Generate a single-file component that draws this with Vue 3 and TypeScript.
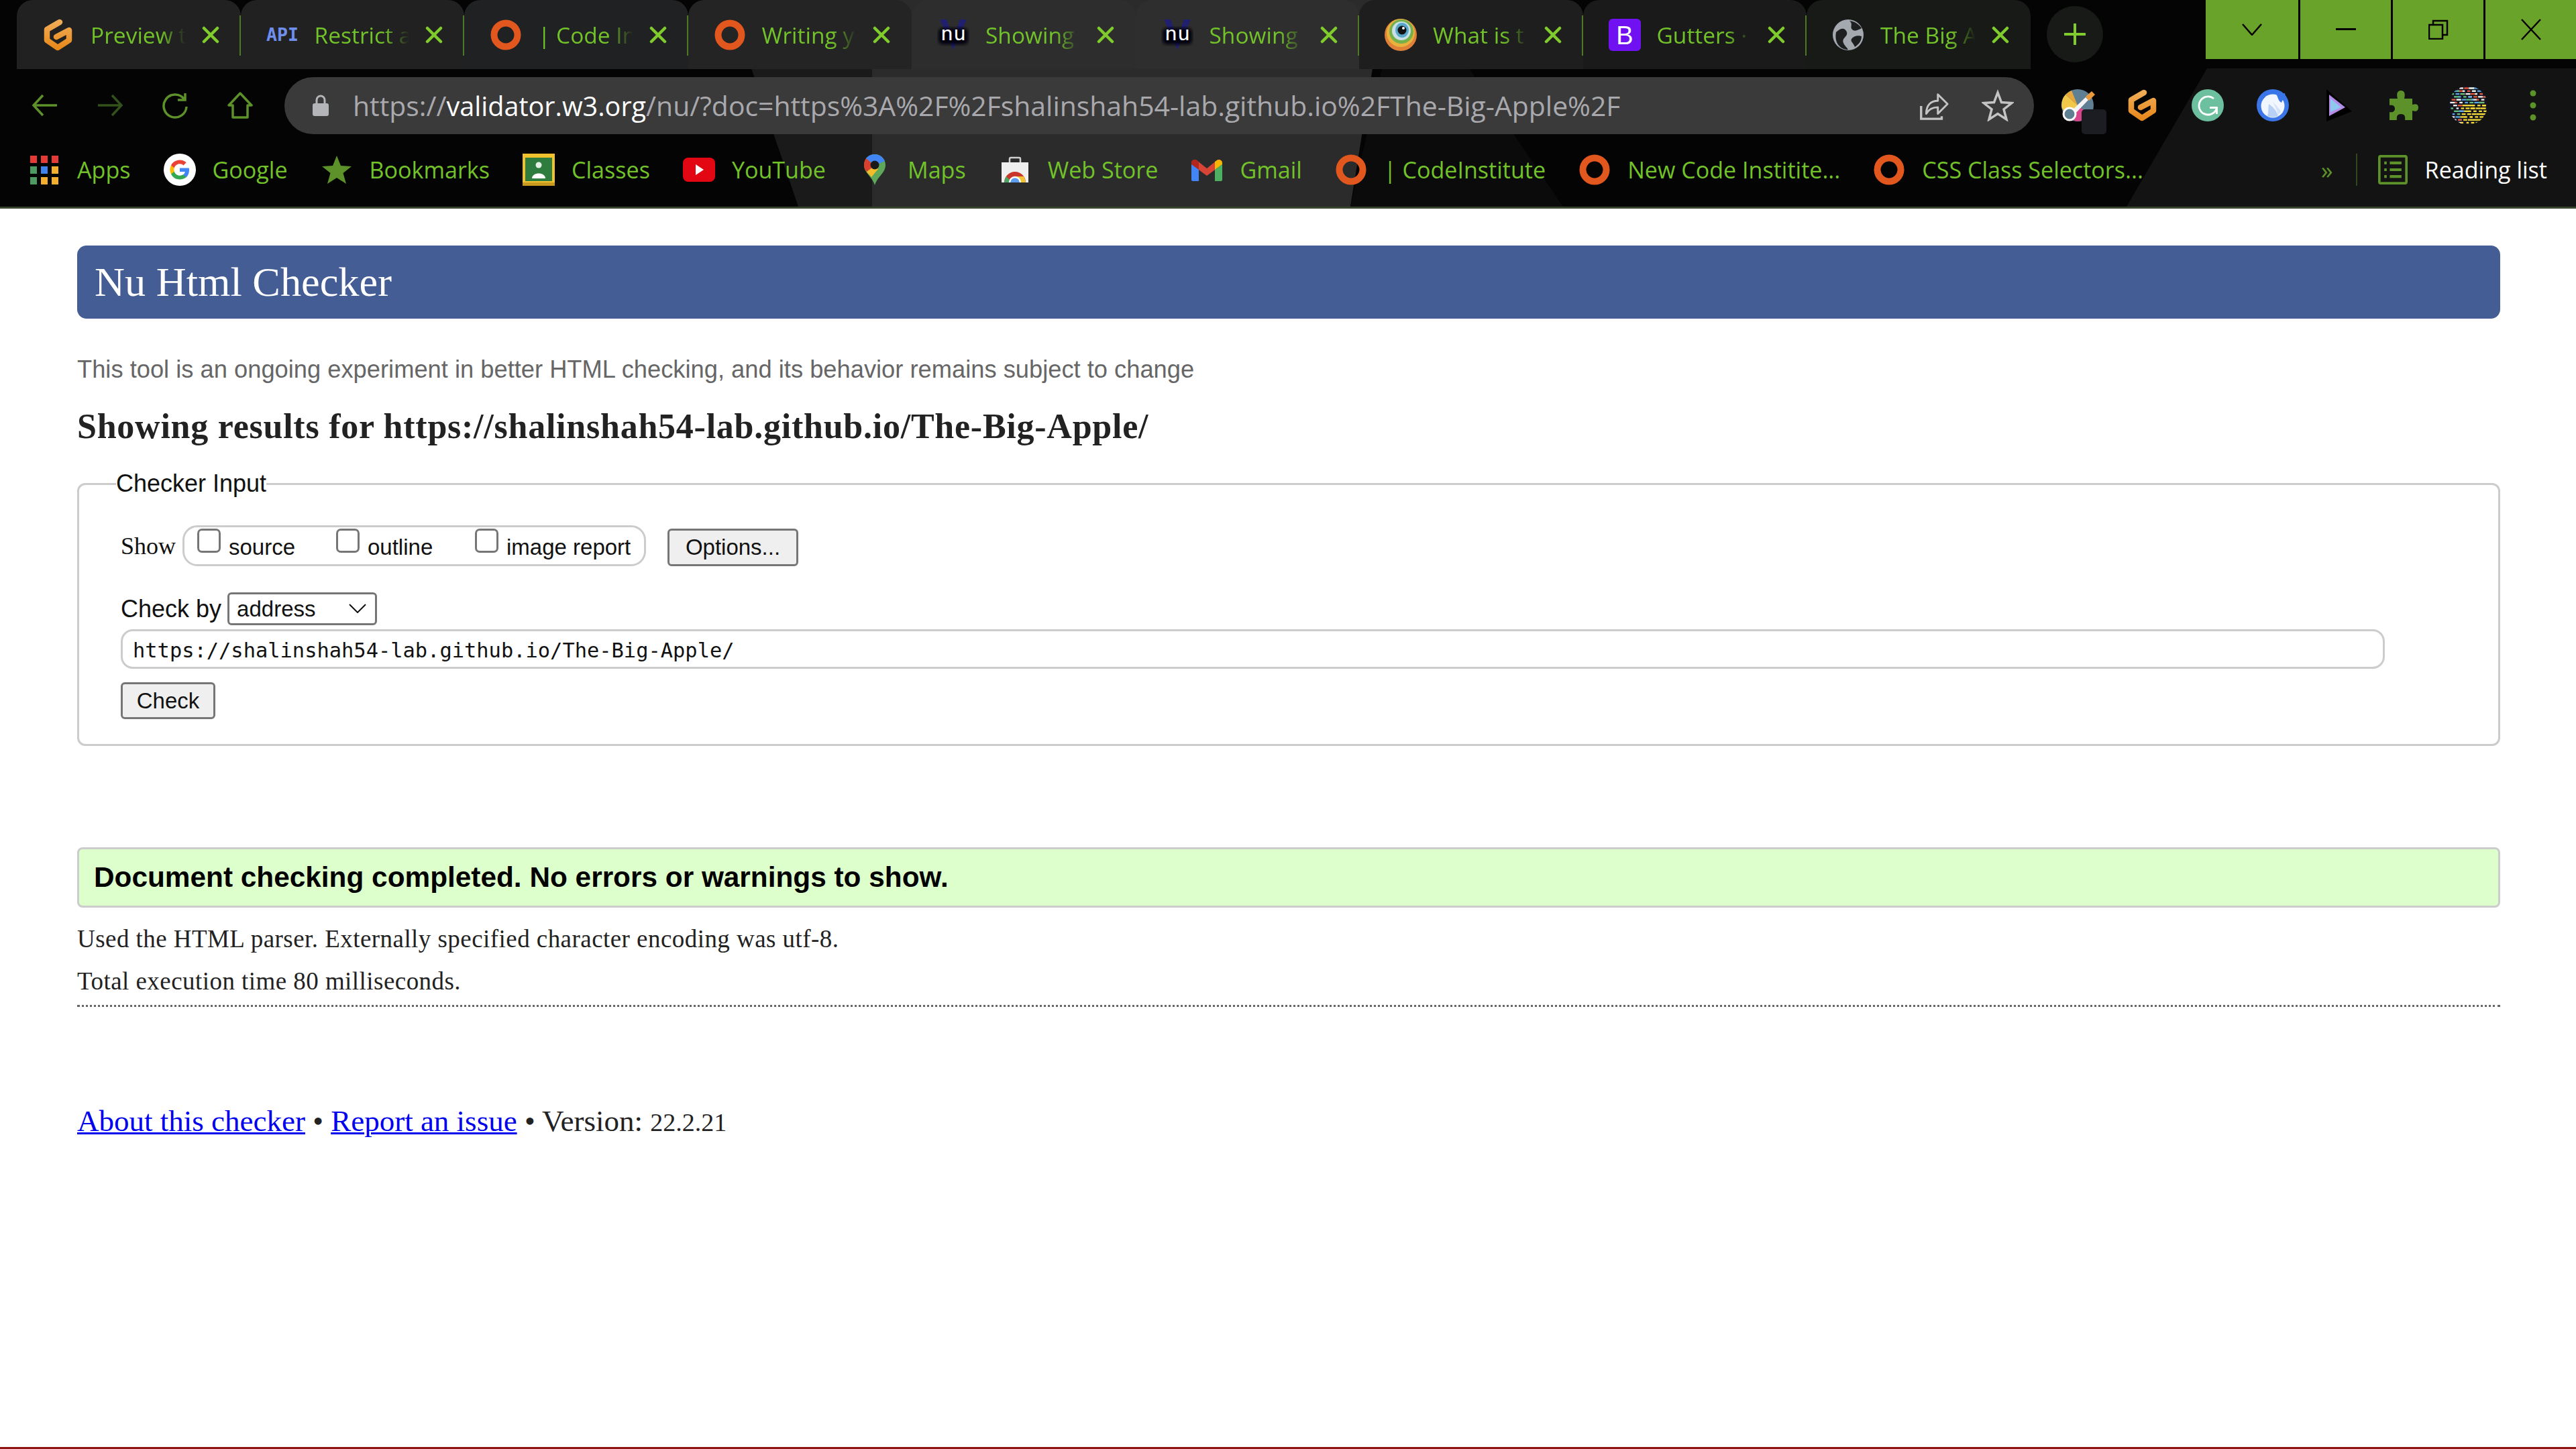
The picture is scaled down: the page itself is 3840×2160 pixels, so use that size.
<script setup lang="ts">
interface Tab {
  icon: string
  title: string
  bg: string
  sep: boolean
  glyph?: string
}

interface Mark {
  icon: string
  label: string
}

const tabs: Tab[] = [
  { icon: 'i-gitpod', title: 'Preview t', bg: '#212121', sep: true },
  { icon: 'i-blank', title: 'Restrict a', bg: '#212121', sep: true, glyph: 'api' },
  { icon: 'i-ring', title: '| Code In', bg: '#202122', sep: true },
  { icon: 'i-ring', title: 'Writing y', bg: '#242424', sep: false },
  { icon: 'i-nu', title: 'Showing', bg: '#2d2d2d', sep: false, glyph: 'nu' },
  { icon: 'i-nu', title: 'Showing', bg: '#2e2e2e', sep: true, glyph: 'nu' },
  { icon: 'i-eye', title: 'What is t', bg: '#1e1e1e', sep: true },
  { icon: 'i-boot', title: 'Gutters ·', bg: '#1a1a1a', sep: true, glyph: 'boot' },
  { icon: 'i-globe', title: 'The Big A', bg: '#181a18', sep: false },
]

const marks: Mark[] = [
  { icon: 'i-apps', label: 'Apps' },
  { icon: 'i-google', label: 'Google' },
  { icon: 'i-star', label: 'Bookmarks' },
  { icon: 'i-classes', label: 'Classes' },
  { icon: 'i-youtube', label: 'YouTube' },
  { icon: 'i-maps', label: 'Maps' },
  { icon: 'i-store', label: 'Web Store' },
  { icon: 'i-gmail', label: 'Gmail' },
  { icon: 'i-ring', label: '| CodeInstitute' },
  { icon: 'i-ring', label: 'New Code Institite...' },
  { icon: 'i-ring', label: 'CSS Class Selectors...' },
]

const extensions = ['i-palette', 'i-gitpod', 'i-grammarly', 'i-bird', 'i-arrow', 'i-puzzle', 'i-avatar', 'i-dots']

// the profile picture is a photo of code, so rows of coloured dashes
const dashes = Array.from({ length: 110 }, (_, i) => {
  const row = i % 13
  const x = 2 + ((i * 29) % 44)
  let fill = ['#f0f0f0', '#5aa6e8', '#e8583c', '#62c47c'][(i * 7) % 4]
  if (row > 5 && x > 14)
    fill = '#f6dc35'
  return { x, y: 2 + row * 3.7, w: 3 + (i % 5), fill }
})
</script>

<template>
  <div class="page">
    <svg class="sprite" aria-hidden="true">
      <defs>
        <linearGradient id="g-orange" x1="0" y1="0" x2="0" y2="1">
          <stop offset="0" stop-color="#f0ac55" />
          <stop offset="1" stop-color="#e8891c" />
        </linearGradient>
        <filter id="soft"><feGaussianBlur stdDeviation="2.500" /></filter>
        <clipPath id="bag-clip"><rect x="4" y="13" width="40" height="30" /></clipPath>
      </defs>
      <symbol id="i-blank" viewBox="0 0 48 48" />
      <symbol id="i-gitpod" viewBox="0 0 48 48">
        <path d="M26 5 L7 16 V32 L23 43 L40 32 V17 L21 27" fill="none" stroke="url(#g-orange)" stroke-width="8.500" stroke-linejoin="round" stroke-linecap="round" />
      </symbol>
      <symbol id="i-ring" viewBox="0 0 48 48">
        <circle cx="24" cy="24" r="17.500" fill="none" stroke="#e2571e" stroke-width="10" />
      </symbol>
      <symbol id="i-nu" viewBox="0 0 48 48">
        <path d="M4 1 L24 46 L44 1 H34 L24 28 L14 1 Z" fill="#20206e" />
        <rect x="2" y="14" width="44" height="24" rx="6" fill="#060608" filter="url(#soft)" />
      </symbol>
      <symbol id="i-eye" viewBox="0 0 48 48">
        <ellipse cx="24" cy="24" rx="24" ry="24" fill="#e0813a" />
        <ellipse cx="24" cy="21" rx="21" ry="21" fill="#e8b23c" />
        <ellipse cx="25" cy="19" rx="18" ry="18" fill="#76b04a" />
        <ellipse cx="25" cy="18" rx="14" ry="14" fill="#c9dfe6" />
        <ellipse cx="26" cy="17" rx="10" ry="11" fill="#58a6c8" />
        <circle cx="26" cy="17" r="6.500" fill="#111" />
        <circle cx="28" cy="14" r="2" fill="#fff" />
      </symbol>
      <symbol id="i-boot" viewBox="0 0 48 48">
        <rect width="48" height="48" rx="6" fill="#7011f2" />
      </symbol>
      <symbol id="i-globe" viewBox="0 0 48 48">
        <circle cx="24" cy="24" r="23" fill="#a4a8af" />
        <path d="M6 20 C14 12 20 14 22 20 C24 27 14 28 17 36 C19 41 22 42 24 46 C12 46 3 36 6 20 Z M26 3 C32 8 26 12 30 16 C34 20 40 16 44 14 C40 8 34 4 26 3 Z M44 26 C38 24 32 26 29 30 C27 34 32 36 34 42 C40 38 44 33 44 26 Z" fill="#1d1f20" />
      </symbol>
      <symbol id="i-apps" viewBox="0 0 48 48">
        <g fill="#e53a35"><rect x="3" y="3" width="10" height="11" /><rect x="19" y="3" width="10" height="11" /><rect x="35" y="3" width="10" height="11" /></g>
        <rect x="3" y="19" width="10" height="11" fill="#4d9a63" /><rect x="19" y="19" width="10" height="11" fill="#3f83ef" /><rect x="35" y="19" width="10" height="11" fill="#f2ae2c" />
        <rect x="3" y="35" width="10" height="11" fill="#4d9a63" /><rect x="19" y="35" width="10" height="11" fill="#f2ae2c" /><rect x="35" y="35" width="10" height="11" fill="#f2ae2c" />
      </symbol>
      <symbol id="i-google" viewBox="0 0 48 48">
        <circle cx="24" cy="24" r="24" fill="#fff" />
        <path d="M38 24.400c0-1-.1-2-.3-3H24v5.700h7.900a6.800 6.800 0 0 1-2.900 4.400v3.700h4.700c2.800-2.600 4.300-6.300 4.300-10.800z" fill="#4285f4" />
        <path d="M24 38.500c3.900 0 7.200-1.300 9.700-3.500L29 31.300c-1.300.9-3 1.400-5 1.400-3.800 0-7-2.500-8.200-6h-4.800v3.800A14.500 14.500 0 0 0 24 38.500z" fill="#34a853" />
        <path d="M15.800 26.700a8.700 8.700 0 0 1 0-5.500v-3.800H11a14.500 14.500 0 0 0 0 13.100z" fill="#fbbc05" />
        <path d="M24 15.300c2.100 0 4 .7 5.500 2.200l4.200-4.200A14.500 14.500 0 0 0 11 17.400l4.800 3.800c1.200-3.400 4.400-5.900 8.200-5.900z" fill="#ea4335" />
      </symbol>
      <symbol id="i-star" viewBox="0 0 48 48">
        <path d="M24 3 L30 18 L46 19 L33.500 29 L38 45 L24 36 L10 45 L14.500 29 L2 19 L18 18 Z" fill="#5d9129" />
      </symbol>
      <symbol id="i-classes" viewBox="0 0 48 48">
        <rect width="48" height="48" fill="#f2c12e" />
        <rect x="4" y="6" width="40" height="35" fill="#2e7d3f" />
        <circle cx="24" cy="17" r="4.500" fill="#e6efe4" />
        <path d="M14 37 C14 27 34 27 34 37 Z" fill="#fff" />
        <rect y="43" width="48" height="5" fill="#c99a1e" />
      </symbol>
      <symbol id="i-youtube" viewBox="0 0 48 48">
        <rect y="6" width="48" height="36" rx="8" fill="#e30613" />
        <path d="M19 16 L31 24 L19 32 Z" fill="#fff" />
      </symbol>
      <symbol id="i-maps" viewBox="0 0 48 48">
        <path d="M24 1 C14 1 8 9 8 17 C8 29 20 34 24 47 C28 34 40 29 40 17 C40 9 34 1 24 1 Z" fill="#5fa85a" />
        <path d="M11 7 C14 3 19 1 24 1 C31 1 36 5 39 11 L24 18 Z" fill="#4285f4" />
        <path d="M8 17 C8 13 9 10 11 7 L24 18 L12 27 C9 24 8 21 8 17 Z" fill="#d9402f" />
        <path d="M12 27 L24 18 L29 23 L19 35 C17 32 14 30 12 27 Z" fill="#f2bc2a" />
        <circle cx="24" cy="17" r="6.500" fill="#1a1a1a" />
      </symbol>
      <symbol id="i-store" viewBox="0 0 48 48">
        <path d="M16 15 V8 Q16 6 18 6 H30 Q32 6 32 8 V15" fill="none" stroke="#cfcfcf" stroke-width="2.500" />
        <rect x="4" y="13" width="40" height="30" fill="#efefef" />
        <g clip-path="url(#bag-clip)">
          <path d="M8 43 A16 16 0 0 1 40 43 H33 L24 37 L15 43 Z" fill="#c9362b" />
          <path d="M8 43 A16 16 0 0 1 11 34 L17 40 L15 43 Z" fill="#4aa564" />
          <path d="M40 43 A16 16 0 0 0 37 34 L24 34 L33 43 Z" fill="#efc335" />
          <circle cx="24" cy="43" r="8" fill="#5c9df0" stroke="#fff" stroke-width="2.500" />
        </g>
      </symbol>
      <symbol id="i-gmail" viewBox="0 0 48 48">
        <path d="M1 14 A5 5 0 0 1 9 10 L24 22 L39 10 A5 5 0 0 1 47 14 V16 L24 33 L1 16 Z" fill="#d94534" />
        <path d="M1 14 A5 5 0 0 1 9 10 L12 12 V24 L1 16 Z" fill="#b3261e" />
        <path d="M47 14 A5 5 0 0 0 39 10 L36 12 V24 L47 16 Z" fill="#f6b704" />
        <path d="M1 16 L12 24 V41 H3 A2 2 0 0 1 1 39 Z" fill="#4285f4" />
        <path d="M47 16 L36 24 V41 H45 A2 2 0 0 0 47 39 Z" fill="#4caf62" />
      </symbol>
      <symbol id="i-palette" viewBox="0 0 67 67">
        <circle cx="24" cy="24" r="24" fill="#5f7f93" />
        <path d="M0 24 A24 24 0 0 1 6 8 L24 24 L12 38 C5 35 0 30 0 24 Z" fill="#f2c84a" />
        <path d="M6 8 A24 24 0 0 1 15 2 L24 24 Z" fill="#e6a83c" />
        <path d="M12 38 L24 24 L40 36 C36 44 30 48 24 48 C19 48 15 44 12 38 Z" fill="#d9458a" />
        <path d="M14 33 L36 12 L40 16 L19 38 Z" fill="#f4f4f4" />
        <path d="M36 11 L45 3 L50 8 L41 17 Z" fill="#e89a3c" />
        <circle cx="12" cy="37" r="9" fill="#5f7f93" stroke="#fff" stroke-width="3" />
        <rect x="30" y="30" width="37" height="37" rx="5" fill="#1c1d22" />
      </symbol>
      <symbol id="i-grammarly" viewBox="0 0 48 48">
        <circle cx="24" cy="24" r="24" fill="#6cbf9f" />
        <path d="M33 14 A13.500 13.500 0 1 0 37.500 28" fill="none" stroke="#fff" stroke-width="2.800" />
        <path d="M27 27.500 H37.500 V37" fill="none" stroke="#fff" stroke-width="2.800" />
      </symbol>
      <symbol id="i-bird" viewBox="0 0 48 48">
        <circle cx="24" cy="24" r="24" fill="#3b76e8" />
        <circle cx="24" cy="25" r="17.500" fill="#f2f6fe" />
        <path d="M29 7 C32 12 32 18 37 20 C38 16 40 14 44 16 L42 6 Z" fill="#3b76e8" />
        <path d="M18 22 C24 26 30 32 32 40 C26 42 20 42 16 40 C18 34 17 28 18 22 Z" fill="#b9d0f6" />
        <path d="M24 18 C28 24 34 28 36 34 L32 38 C30 30 26 24 24 18 Z" fill="#d5e3fa" />
      </symbol>
      <symbol id="i-arrow" viewBox="0 0 48 48">
        <path d="M7 0 L45 33 L7 48 Z" fill="#000" />
        <path d="M11 8 L35 27 L11 40 Z" fill="#b48be6" />
        <path d="M13 14 L29 27 L13 34 Z" fill="#8fc7ee" />
      </symbol>
      <symbol id="i-puzzle" viewBox="0 0 48 48">
        <path d="M4 14 H16 C14 6 16 2 21 2 C26 2 28 6 26 14 H38 V23 C44 21 47 23 47 27 C47 32 44 34 38 32 V46 H27 C28 40 26 37 21 37 C16 37 14 40 15 46 H4 V34 C9 35 12 33 12 29 C12 25 9 23 4 24 Z" fill="#5d9129" />
      </symbol>
      <symbol id="i-avatar" viewBox="0 0 50 50">
        <clipPath id="avatar-clip"><circle cx="25" cy="25" r="25" /></clipPath>
        <g clip-path="url(#avatar-clip)">
          <rect width="50" height="50" fill="#14151f" />
          <rect v-for="(d, i) in dashes" :key="i" :x="d.x" :y="d.y" :width="d.w" height="2" :fill="d.fill" />
        </g>
      </symbol>
      <symbol id="i-dots" viewBox="0 0 48 48">
        <circle cx="24" cy="6" r="4.500" fill="#5d9129" /><circle cx="24" cy="24" r="4.500" fill="#5d9129" /><circle cx="24" cy="42" r="4.500" fill="#5d9129" />
      </symbol>
      <symbol id="i-x" viewBox="0 0 26 26">
        <path d="M3 3 L23 23 M23 3 L3 23" fill="none" stroke="#7fcc2c" stroke-width="4.500" stroke-linecap="round" />
      </symbol>
    </svg>

    <header class="chrome">
      <svg class="wallpaper" viewBox="0 0 3840 311" preserveAspectRatio="none" aria-hidden="true">
        <rect width="3840" height="311" fill="#040404" />
        <polygon points="1120,0 2060,0 2046,103 2013,311 1190,311" fill="#2b2b2b" />
        <polygon points="1120,103 1300,103 1300,311 1190,311" fill="#1a1a1a" />
        <polygon points="2060,103 2190,103 2330,311 2013,311" fill="#0b0b0b" />
        <polygon points="3290,103 3840,103 3840,311 3170,311" fill="#131313" />
      </svg>

      <div class="tabstrip">
        <div
          v-for="(tab, i) in tabs"
          :key="i"
          class="tab"
          :class="{ 'has-sep': tab.sep }"
          :style="{ background: tab.bg }"
        >
          <svg class="icon" viewBox="0 0 48 48">
            <use :href="`#${tab.icon}`" width="48" height="48" />
            <text v-if="tab.glyph === 'api'" x="0" y="33" class="glyph-api" textLength="48" lengthAdjust="spacingAndGlyphs">API</text>
            <text v-if="tab.glyph === 'nu'" x="5" y="32" class="glyph-nu" textLength="38" lengthAdjust="spacingAndGlyphs">nu</text>
            <text v-if="tab.glyph === 'boot'" x="24" y="38" class="glyph-boot" text-anchor="middle">B</text>
          </svg>
          <span class="tab-title">{{ tab.title }}</span>
          <svg class="tab-close"><use href="#i-x" /></svg>
        </div>
        <div class="new-tab">
          <svg viewBox="0 0 32 32" width="32" height="32"><path d="M16 1 V31 M1 16 H31" stroke="#7fcc2c" stroke-width="4" stroke-linecap="round" /></svg>
        </div>
        <div class="window-buttons">
          <div class="win-btn">
            <svg viewBox="0 0 30 18" width="30" height="18"><path d="M1 1 L15 17 L29 1" fill="none" stroke="#000" stroke-width="2.500" /></svg>
          </div>
          <div class="win-btn">
            <svg viewBox="0 0 30 4" width="30" height="4"><rect width="30" height="3" fill="#000" /></svg>
          </div>
          <div class="win-btn">
            <svg viewBox="0 0 30 30" width="30" height="30"><path d="M1 8 H21 V29 H1 Z M7 8 V2 H28 V23 H21" fill="none" stroke="#000" stroke-width="2.500" /></svg>
          </div>
          <div class="win-btn">
            <svg viewBox="0 0 32 32" width="32" height="32"><path d="M2 1 L30 31 M30 1 L2 31" fill="none" stroke="#000" stroke-width="2.500" /></svg>
          </div>
        </div>
      </div>

      <div class="toolbar">
        <div class="tool">
          <svg viewBox="0 0 40 40" width="40" height="40"><path d="M38 20 H4 M17 5 L3 20 L17 35" fill="none" stroke="#5d9129" stroke-width="3.500" /></svg>
        </div>
        <div class="tool">
          <svg viewBox="0 0 40 40" width="40" height="40"><path d="M2 20 H36 M23 5 L37 20 L23 35" fill="none" stroke="#33511a" stroke-width="3.500" /></svg>
        </div>
        <div class="tool">
          <svg viewBox="0 0 40 40" width="40" height="40"><path d="M33 10 A17 17 0 1 0 37 22 M24 12 H35 V2" fill="none" stroke="#5d9129" stroke-width="3.500" /></svg>
        </div>
        <div class="tool">
          <svg viewBox="0 0 40 40" width="40" height="40"><path d="M20 2 L37 20 H31 V38 H9 V20 H3 Z" fill="none" stroke="#5d9129" stroke-width="3.500" stroke-linejoin="round" /></svg>
        </div>
        <div class="omnibox">
          <svg class="lock" viewBox="0 0 24 32" width="24" height="32"><path d="M6 14 V8 A6 6 0 0 1 18 8 V14" fill="none" stroke="#b4b5b9" stroke-width="3" /><rect y="13" width="24" height="19" rx="3" fill="#b4b5b9" /></svg>
          <span class="url">https://<b class="host">validator.w3.org</b>/nu/?doc=https%3A%2F%2Fshalinshah54-lab.github.io%2FThe-Big-Apple%2F</span>
          <svg class="omni-icon" viewBox="0 0 50 50" width="48" height="48"><path d="M6 26 V46 H38 V42" fill="none" stroke="#c4c4c4" stroke-width="3.500" /><path d="M14 38 C14 24 22 18 32 18 V8 L47 23 L32 38 V28 C24 28 18 31 14 38 Z" fill="none" stroke="#c4c4c4" stroke-width="3" stroke-linejoin="round" /></svg>
          <svg class="omni-icon star" viewBox="0 0 48 48" width="48" height="48"><path d="M24 5 L29.500 19.500 L45 20.500 L33 30 L37 45 L24 36.500 L11 45 L15 30 L3 20.500 L18.500 19.500 Z" fill="none" stroke="#c4c4c4" stroke-width="3.500" /></svg>
        </div>
        <div class="extensions">
          <div v-for="ext in extensions" :key="ext" class="tool">
            <svg class="icon ext" :class="{ big: ext === 'i-avatar', wide: ext === 'i-palette' }"><use :href="`#${ext}`" /></svg>
          </div>
        </div>
      </div>

      <div class="bookmarks">
        <div v-for="(mark, i) in marks" :key="i" class="mark">
          <svg class="icon"><use :href="`#${mark.icon}`" /></svg>
          <span>{{ mark.label }}</span>
        </div>
        <div class="mark-more">
          <span class="chevrons">»</span>
          <i class="mark-sep" />
          <svg class="icon reading" viewBox="0 0 48 48"><rect x="2" y="2" width="44" height="44" rx="2" fill="none" stroke="#5d9129" stroke-width="4" /><path d="M10 13 H14 M19 13 H38 M10 24 H14 M19 24 H38 M10 35 H14 M19 35 H38" stroke="#5d9129" stroke-width="4.500" /></svg>
          <span class="reading-label">Reading list</span>
        </div>
      </div>
    </header>

    <main class="checker">
      <h1 class="banner">Nu Html Checker</h1>
      <p class="note">This tool is an ongoing experiment in better HTML checking, and its behavior remains subject to change</p>
      <h2 class="results-for">Showing results for https://shalinshah54-lab.github.io/The-Big-Apple/</h2>

      <fieldset class="input-box">
        <legend>Checker Input</legend>
        <div class="show-row">
          <span class="show-label">Show</span>
          <fieldset class="show-options">
            <label><input type="checkbox"><span>source</span></label>
            <label><input type="checkbox"><span>outline</span></label>
            <label><input type="checkbox"><span>image report</span></label>
          </fieldset>
          <button class="btn options" type="button">Options...</button>
        </div>
        <div class="by-row">
          <span>Check by</span>
          <div class="select-wrap">
            <select><option>address</option></select>
            <svg viewBox="0 0 26 14" width="26" height="14"><path d="M1 1 L13 13 L25 1" fill="none" stroke="#111" stroke-width="2" /></svg>
          </div>
        </div>
        <input class="doc-url" type="text" value="https://shalinshah54-lab.github.io/The-Big-Apple/" readonly>
        <button class="btn check" type="button">Check</button>
      </fieldset>

      <div class="success">Document checking completed. No errors or warnings to show.</div>
      <p class="detail">Used the HTML parser. Externally specified character encoding was utf-8.</p>
      <p class="detail time">Total execution time 80 milliseconds.</p>
      <p class="footer">
        <a href="#">About this checker</a> • <a href="#">Report an issue</a> • Version: <span class="version">22.2.21</span>
      </p>
    </main>
    <div class="edge" />
  </div>
</template>

<style>
html, body {
  margin: 0;
  background: #fff;
}
</style>

<style scoped>
.page {
  width: 3840px;
  height: 2160px;
  display: flex;
  flex-direction: column;
  overflow: hidden;
  background: #fff;
}

.sprite {
  position: absolute;
  width: 0;
  height: 0;
}

.chrome {
  position: relative;
  height: 311px;
  box-sizing: border-box;
  border-bottom: 3px solid #39452c;
  font-family: "Open Sans", sans-serif;
  font-size: 34.100px;
  color: #72c22a;
}

.wallpaper {
  position: absolute;
  left: 0;
  top: 0;
  width: 100%;
  height: 100%;
}

.tabstrip,
.toolbar,
.bookmarks {
  position: relative;
  display: flex;
}

.tabstrip {
  height: 103px;
  padding-left: 25px;
}

.tab {
  position: relative;
  width: 333.500px;
  height: 103px;
  display: flex;
  align-items: center;
  box-sizing: border-box;
  padding: 0 32px 0 38px;
  border-radius: 24px 24px 0 0;
  font-size: 33.500px;
}

.tab.has-sep::after {
  content: "";
  position: absolute;
  right: -1px;
  top: 23px;
  width: 3px;
  height: 60px;
  background: #4b7a24;
}

.icon {
  width: 48px;
  height: 48px;
  flex: none;
}

.glyph-api {
  font-family: "DejaVu Sans Mono", monospace;
  font-weight: 700;
  font-size: 26px;
  fill: #6f8fee;
}

.glyph-nu {
  font-family: "DejaVu Sans Mono", monospace;
  font-size: 28px;
  fill: #fff;
}

.glyph-boot {
  font-family: "Liberation Sans", sans-serif;
  font-size: 38px;
  fill: #fff;
}

.tab-title {
  flex: 1;
  min-width: 0;
  margin-left: 24px;
  white-space: nowrap;
  -webkit-mask-image: linear-gradient(to right, #000 74%, transparent 100%);
  mask-image: linear-gradient(to right, #000 74%, transparent 100%);
}

.tab-close {
  width: 26px;
  height: 26px;
  flex: none;
  margin-left: 24px;
}

.new-tab {
  width: 84px;
  height: 84px;
  margin: 9px 0 0 24px;
  border-radius: 50%;
  background: #181a18;
  display: flex;
  align-items: center;
  justify-content: center;
}

.window-buttons {
  display: flex;
  height: 88px;
  margin-left: auto;
}

.win-btn {
  width: 138px;
  box-sizing: border-box;
  display: flex;
  align-items: center;
  justify-content: center;
  background: #6aa32a;
}

.win-btn + .win-btn {
  border-left: 3px solid #000;
}

.toolbar {
  height: 108px;
  align-items: center;
  padding-left: 18px;
}

.tool {
  width: 97px;
  display: flex;
  align-items: center;
  justify-content: center;
  flex: none;
}

.omnibox {
  width: 2608px;
  height: 85px;
  margin-left: 18px;
  box-sizing: border-box;
  padding: 0 30px 0 42px;
  display: flex;
  align-items: center;
  border-radius: 43px;
  background: #3a3a3a;
}

.url {
  margin-left: 36px;
  font-size: 40.900px;
  color: #a9a9ad;
  white-space: nowrap;
}

.host {
  font-weight: 400;
  font-size: 39.600px;
  color: #fff;
}

.omni-icon {
  margin-left: auto;
  flex: none;
}

.omni-icon.star {
  margin-left: 48px;
}

.extensions {
  display: flex;
  margin-left: 16px;
}

.ext.big {
  width: 58px;
  height: 58px;
}

.ext.wide {
  width: 67px;
  height: 67px;
  margin: 19px 0 0 19px;
}

.bookmarks {
  height: 94px;
  padding: 0 43px 10px 42px;
  box-sizing: border-box;
  align-items: center;
  gap: 49px;
  white-space: nowrap;
}

.mark {
  display: flex;
  align-items: center;
  gap: 25px;
}

.mark-more {
  display: flex;
  align-items: center;
  margin-left: auto;
}

.chevrons {
  color: #5d9129;
  font-size: 36px;
}

.mark-sep {
  width: 2px;
  height: 48px;
  margin: 0 31px 0 34px;
  background: #33471d;
}

.reading {
  width: 44px;
  height: 44px;
}

.reading-label {
  margin-left: 26px;
  color: #fff;
}

.checker {
  flex: 1;
  min-height: 0;
  padding: 0 113px 0 115px;
  font-family: "Liberation Serif", serif;
  color: #222;
}

.banner {
  margin: 55px 0 0;
  height: 109px;
  box-sizing: border-box;
  padding-left: 26px;
  border-radius: 14px;
  background: #445e95;
  color: #fff;
  font-size: 62.300px;
  font-weight: 400;
  line-height: 107px;
}

.note {
  margin: 54px 0 0;
  font-family: "Liberation Sans", sans-serif;
  font-size: 36.300px;
  line-height: 44px;
  color: #666;
}

.results-for {
  margin: 33px 0 0;
  font-size: 52px;
  line-height: 60px;
  letter-spacing: 0.750px;
}

.input-box {
  margin: 34px 0 0;
  height: 412px;
  box-sizing: border-box;
  padding: 41px 0 0 62px;
  min-width: 0;
  border: 3px solid #ccc;
  border-radius: 12px;
  font-family: "Liberation Sans", sans-serif;
  font-size: 36px;
  color: #111;
}

.input-box legend {
  margin-left: -7px;
  padding: 0;
  line-height: 42px;
}

.show-row,
.by-row {
  display: flex;
  align-items: center;
}

.show-label {
  width: 92px;
  font-family: "Liberation Serif", serif;
  flex: none;
}

.show-options {
  width: 691px;
  height: 61px;
  box-sizing: border-box;
  margin: 0;
  min-width: 0;
  padding: 0 0 0 19px;
  display: flex;
  border: 3px solid #ccc;
  border-radius: 22px;
  font-size: 33px;
  white-space: nowrap;
}

.show-options label {
  display: flex;
  flex: none;
  width: 207px;
  height: 55px;
}

.show-options input {
  appearance: none;
  flex: none;
  box-sizing: border-box;
  width: 35px;
  height: 36px;
  margin: 2px 12px 0 0;
  border: 3px solid #767676;
  border-radius: 7px;
  background: #fff;
}

.show-options span {
  padding-top: 12px;
  line-height: 36px;
}

.btn {
  box-sizing: border-box;
  padding: 0;
  border: 3px solid #767676;
  border-radius: 6px;
  background: #efefef;
  color: #111;
  font-family: "Liberation Sans", sans-serif;
  font-size: 33px;
}

.options {
  width: 195px;
  height: 56px;
  margin: 5px 0 0 32px;
}

.by-row {
  margin-top: 39px;
  height: 49px;
}

.select-wrap {
  position: relative;
  margin-left: 9px;
}

.select-wrap select {
  display: block;
  appearance: none;
  width: 223px;
  height: 49px;
  box-sizing: border-box;
  padding: 0 0 0 11px;
  border: 3px solid #767676;
  border-radius: 6px;
  background: #fff;
  color: #111;
  font-family: "Liberation Sans", sans-serif;
  font-size: 33px;
}

.select-wrap svg {
  position: absolute;
  right: 16px;
  top: 17px;
}

.doc-url {
  display: block;
  width: 3375px;
  height: 59px;
  box-sizing: border-box;
  margin: 6px 0 0;
  padding: 4px 0 0 15px;
  border: 3px solid #ccc;
  border-radius: 18px;
  color: #111;
  font-family: "DejaVu Sans Mono", monospace;
  font-size: 30.400px;
}

.check {
  display: block;
  width: 141px;
  height: 55px;
  margin-top: 20px;
}

.success {
  margin-top: 151px;
  height: 90px;
  box-sizing: border-box;
  padding-left: 22px;
  border: 3px solid #ccc;
  border-radius: 8px;
  background: #dfc;
  color: #000;
  font-family: "Liberation Sans", sans-serif;
  font-size: 42.350px;
  font-weight: 700;
  line-height: 84px;
}

.detail {
  margin: 26px 0 0;
  font-size: 37px;
  line-height: 42px;
  letter-spacing: 0.450px;
}

.detail.time {
  margin-top: 21px;
  padding-bottom: 14px;
  border-bottom: 3px dotted #666;
}

.footer {
  margin: 144px 0 0;
  font-size: 45px;
  line-height: 52px;
}

.footer a {
  color: #00e;
  text-decoration-thickness: 3px;
}

.version {
  font-size: 38px;
}

.edge {
  height: 3px;
  flex: none;
  background: #8f1515;
}
</style>
